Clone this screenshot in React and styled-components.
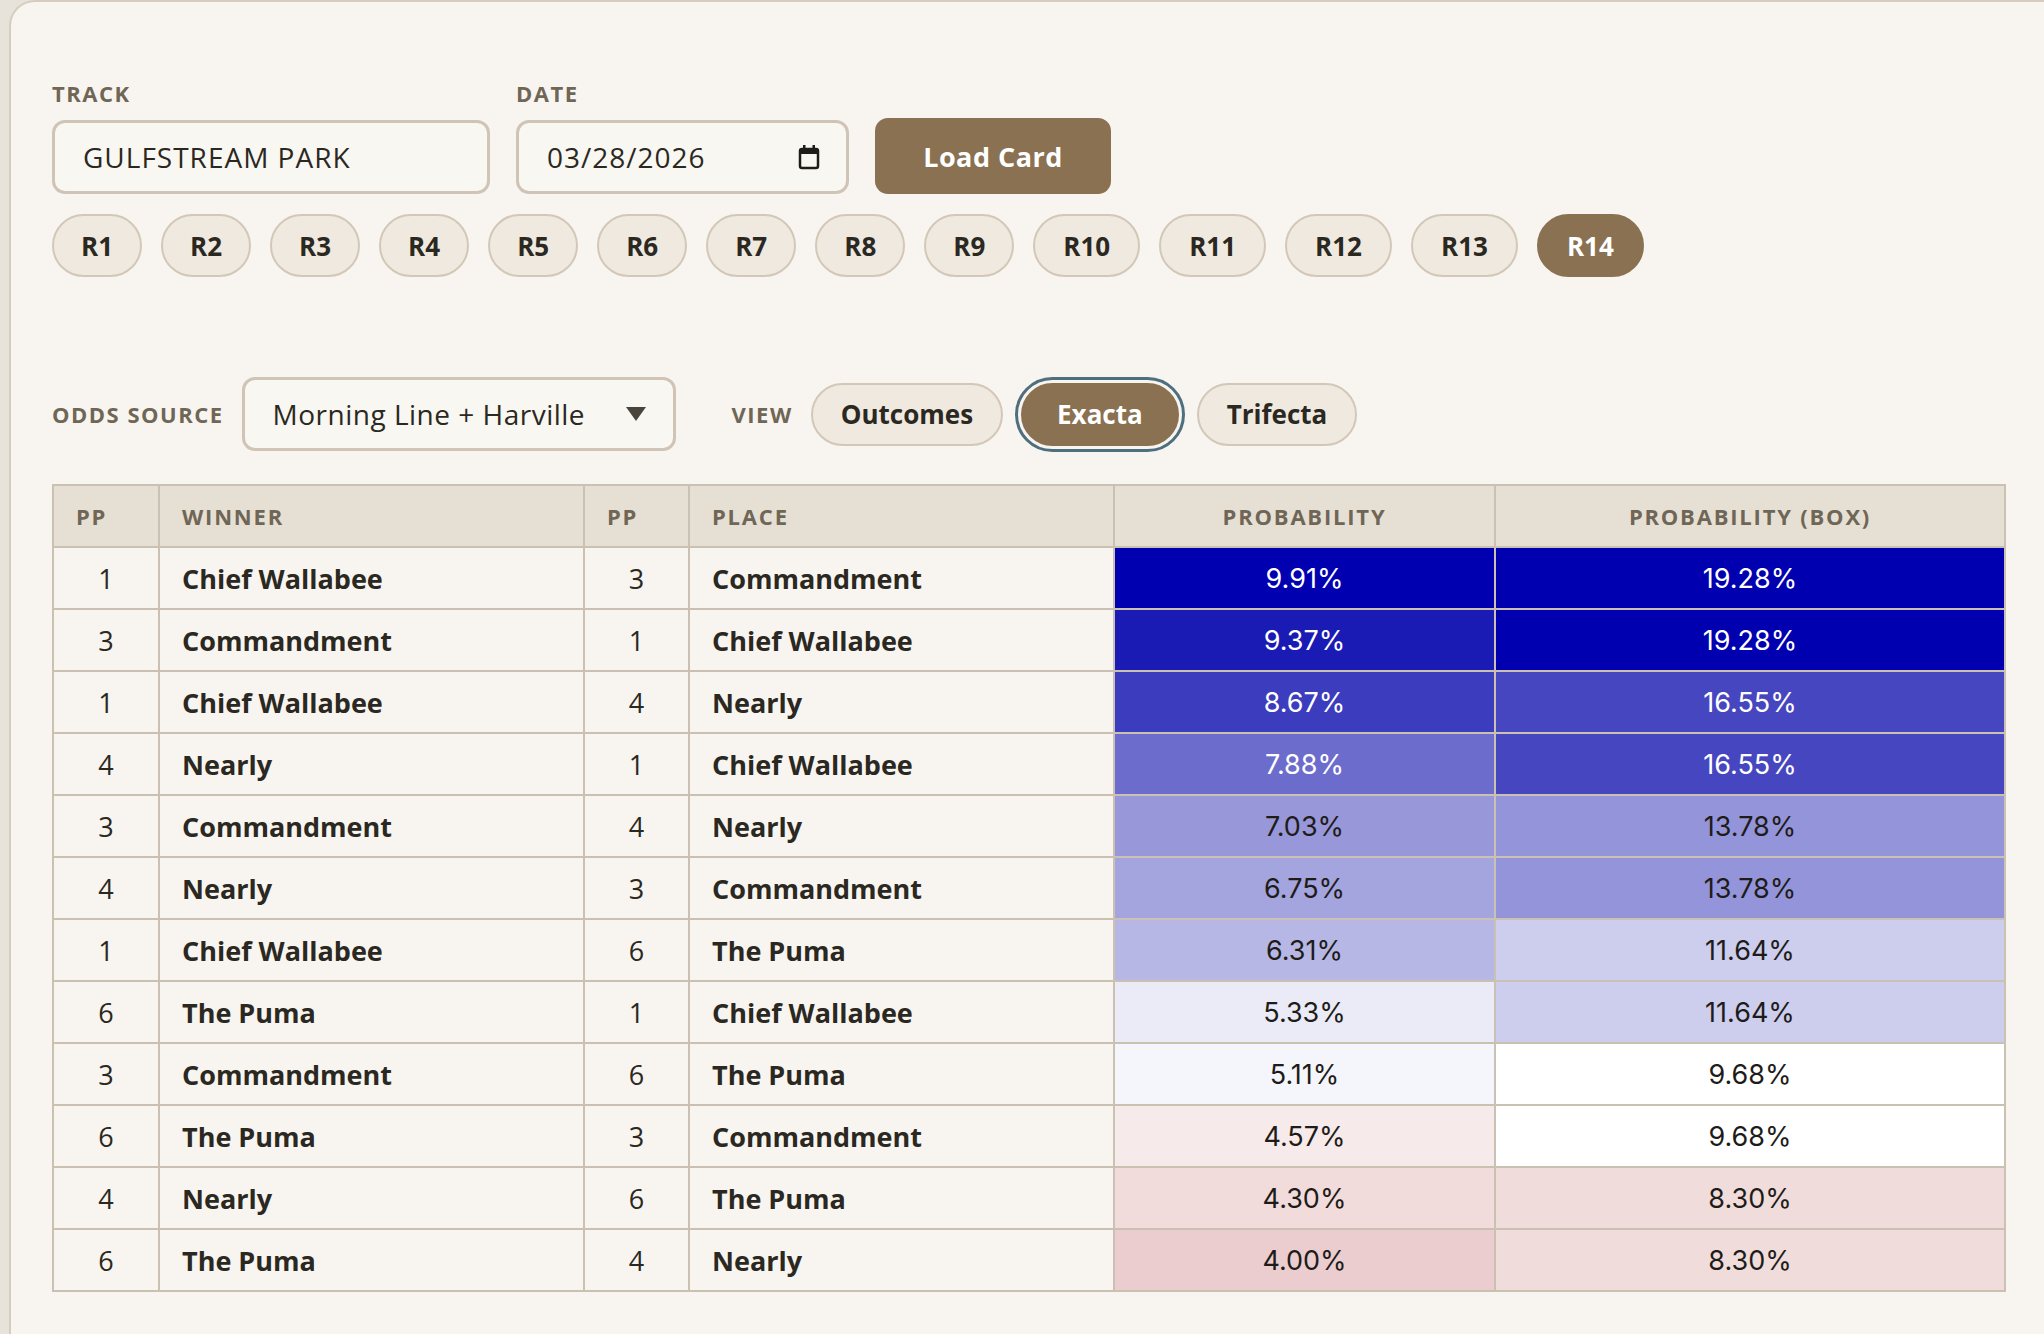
import React from "react";
import styled, { createGlobalStyle } from "styled-components";

const Global = createGlobalStyle`
  html, body { margin: 0; padding: 0; background: #e8e3da; }
  body { font-family: "Open Sans", "Liberation Sans", sans-serif; color: #2b2822; }
`;

const Page = styled.div`
  padding: 0 0 0 9px;
  height: 1334px;
  overflow: hidden;
`;
const Panel = styled.div`
  background: #f8f5f0;
  border: 2px solid #d6cdc0;
  border-right: none;
  border-bottom: none;
  border-top-left-radius: 26px;
  padding: 76px 30px 40px 41px;
  min-height: 1400px;
`;
const Row = styled.div`
  display: flex;
  align-items: flex-end;
  gap: ${p => p.$gap || 26}px;
`;
const Field = styled.div`
  display: flex;
  flex-direction: column;
  gap: 12px;
`;
const Label = styled.div`
  font-family: "Open Sans", sans-serif;
  font-weight: 700;
  font-size: 22px;
  letter-spacing: 1.5px;
  color: #6f6656;
  text-transform: uppercase;
`;
const Box = styled.div`
  box-sizing: border-box;
  width: ${p => p.$w}px;
  height: 74px;
  border: 3px solid #cfc4b5;
  border-radius: 13px;
  background: #f9f7f2;
  display: flex;
  align-items: center;
  justify-content: space-between;
  padding: 0 26px 0 28px;
  font-family: "Open Sans", sans-serif;
  font-size: 28px;
  letter-spacing: 1px;
  color: #2b2822;
`;
const PrimaryBtn = styled.button`
  height: 76px;
  width: 236px;
  border: none;
  border-radius: 13px;
  background: #8a7152;
  color: #fff;
  font-family: "Open Sans", sans-serif;
  font-weight: 700;
  font-size: 27px;
  letter-spacing: 0.5px;
`;
const Pills = styled.div`
  display: flex;
  gap: 19px;
  margin-top: 20px;
`;
const Pill = styled.button`
  box-sizing: border-box;
  height: 63px;
  padding: 0 ${p => p.$pad || 28}px;
  border-radius: 32px;
  border: 2px solid ${p => (p.$active ? "#8a7152" : "#d3c8b8")};
  background: ${p => (p.$active ? "#8a7152" : "#efe9e0")};
  color: ${p => (p.$active ? "#fff" : "#2b2822")};
  font-family: "Open Sans", sans-serif;
  font-weight: 700;
  font-size: 26px;
  outline: ${p => (p.$ring ? "3px solid #4e6f7d" : "none")};
  outline-offset: 3px;
`;
const Controls = styled.div`
  display: flex;
  align-items: center;
  margin-top: 100px;
  gap: 18px;
`;
const Spacer = styled.div`
  width: ${p => p.$w}px;
`;
const Table = styled.table`
  margin-top: 33px;
  border-collapse: collapse;
  width: 1952px;
  table-layout: fixed;
`;
const Th = styled.th`
  background: #e6dfd4;
  border: 2px solid #cbc1b2;
  height: 60px;
  font-family: "Open Sans", sans-serif;
  font-weight: 700;
  font-size: 22px;
  letter-spacing: 1.8px;
  color: #6f6656;
  text-align: ${p => p.$align || "left"};
  padding: 0 22px;
`;
const Td = styled.td`
  border: 2px solid #cbc1b2;
  height: 60px;
  padding: 0 22px;
  background: ${p => p.$bg || "#f8f5f0"};
  color: ${p => p.$fg || "#2b2822"};
  text-align: ${p => p.$align || "left"};
  font-family: ${p => (p.$num ? '"Inter", sans-serif' : '"Open Sans", sans-serif')};
  font-weight: ${p => (p.$bold ? 700 : 400)};
  font-size: ${p => (p.$num ? 27 : 27)}px;
`;
const PPCell = styled(Td)`
  text-align: center;
  font-family: "Open Sans", sans-serif;
`;

const rows = [
  [1, "Chief Wallabee", 3, "Commandment", "9.91%", "#0000b0", "19.28%", "#0000b0"],
  [3, "Commandment", 1, "Chief Wallabee", "9.37%", "#1a1ab4", "19.28%", "#0000b0"],
  [1, "Chief Wallabee", 4, "Nearly", "8.67%", "#3c3cbe", "16.55%", "#4646c0"],
  [4, "Nearly", 1, "Chief Wallabee", "7.88%", "#6c6ccd", "16.55%", "#4646c0"],
  [3, "Commandment", 4, "Nearly", "7.03%", "#9797da", "13.78%", "#9494da"],
  [4, "Nearly", 3, "Commandment", "6.75%", "#a4a4df", "13.78%", "#9494da"],
  [1, "Chief Wallabee", 6, "The Puma", "6.31%", "#b7b7e6", "11.64%", "#cdcdee"],
  [6, "The Puma", 1, "Chief Wallabee", "5.33%", "#ebebf7", "11.64%", "#cdcdee"],
  [3, "Commandment", 6, "The Puma", "5.11%", "#f5f6fb", "9.68%", "#ffffff"],
  [6, "The Puma", 3, "Commandment", "4.57%", "#f7eaea", "9.68%", "#ffffff"],
  [4, "Nearly", 6, "The Puma", "4.30%", "#f1dbdb", "8.30%", "#f1dcdc"],
  [6, "The Puma", 4, "Nearly", "4.00%", "#ebcdcf", "8.30%", "#f1dcdc"],
];
const whiteUntil = ["9.91%", "9.37%", "8.67%", "7.88%", "19.28%", "16.55%"];
const fg = v => (whiteUntil.includes(v) ? "#ffffff" : "#1e1c19");

const Calendar = () => (
  <svg width="22" height="26" viewBox="0 0 22 26">
    <rect x="2" y="5" width="18" height="19" rx="2" fill="none" stroke="#1e1c19" strokeWidth="2.5" />
    <rect x="2" y="5" width="18" height="5" fill="#1e1c19" />
    <rect x="5" y="1" width="2.5" height="5" fill="#1e1c19" />
    <rect x="14.5" y="1" width="2.5" height="5" fill="#1e1c19" />
  </svg>
);
const Caret = () => (
  <svg width="22" height="16" viewBox="0 0 22 16">
    <path d="M1 1 L21 1 L11 15 Z" fill="#4a453c" />
  </svg>
);

export default function App() {
  const races = Array.from({ length: 14 }, (_, i) => `R${i + 1}`);
  return (
    <>
      <Global />
      <Page>
        <Panel>
          <Row>
            <Field>
              <Label>Track</Label>
              <Box $w={438}>GULFSTREAM PARK</Box>
            </Field>
            <Field>
              <Label>Date</Label>
              <Box $w={333}>03/28/2026<Calendar /></Box>
            </Field>
            <PrimaryBtn>Load Card</PrimaryBtn>
          </Row>
          <Pills>
            {races.map(r => (
              <Pill key={r} $active={r === "R14"} $pad={r.length > 2 ? 28 : 27}>{r}</Pill>
            ))}
          </Pills>
          <Controls>
            <Label>Odds Source</Label>
            <Box $w={434} style={{ letterSpacing: 0.5 }}>Morning Line + Harville<Caret /></Box>
            <Spacer $w={20} />
            <Label>View</Label>
            <Pill $pad={28}>Outcomes</Pill>
            <Pill $pad={34} $active $ring>Exacta</Pill>
            <Pill $pad={28}>Trifecta</Pill>
          </Controls>
          <Table>
            <colgroup>
              <col style={{ width: 106 }} />
              <col style={{ width: 425 }} />
              <col style={{ width: 105 }} />
              <col style={{ width: 425 }} />
              <col style={{ width: 381 }} />
              <col style={{ width: 510 }} />
            </colgroup>
            <thead>
              <tr>
                <Th>PP</Th>
                <Th>WINNER</Th>
                <Th>PP</Th>
                <Th>PLACE</Th>
                <Th $align="center">PROBABILITY</Th>
                <Th $align="center">PROBABILITY (BOX)</Th>
              </tr>
            </thead>
            <tbody>
              {rows.map((r, i) => (
                <tr key={i}>
                  <PPCell>{r[0]}</PPCell>
                  <Td $bold>{r[1]}</Td>
                  <PPCell>{r[2]}</PPCell>
                  <Td $bold>{r[3]}</Td>
                  <Td $num $align="center" $bg={r[5]} $fg={fg(r[4])}>{r[4]}</Td>
                  <Td $num $align="center" $bg={r[7]} $fg={fg(r[6])}>{r[6]}</Td>
                </tr>
              ))}
            </tbody>
          </Table>
        </Panel>
      </Page>
    </>
  );
}
